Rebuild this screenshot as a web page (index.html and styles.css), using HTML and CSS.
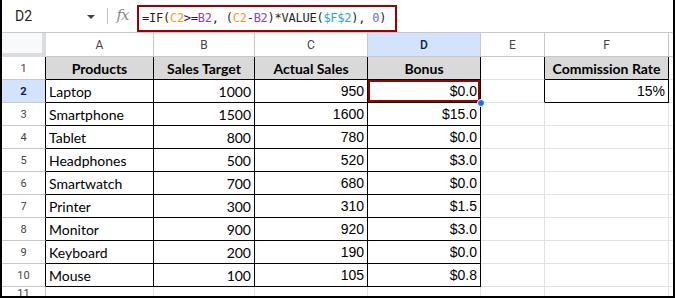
FILE: index.html
```html
<!DOCTYPE html>
<html>
<head>
<meta charset="utf-8">
<link rel="stylesheet" href="styles.css">
</head>
<body>
<div class="app">
  <div class="fbar">
    <div class="namebox">
      <span class="name">D2</span>
      <svg class="caret" width="8" height="4" viewBox="0 0 8 4"><path d="M0 0h8L4 4z" fill="#444"/></svg>
    </div>
    <div class="sep"></div>
    <div class="fx">fx</div>
    <div class="formula"><span>=IF(</span><span class="r1">C2</span><span>&gt;=</span><span class="r2">B2</span><span>, (</span><span class="r1">C2</span><span>-</span><span class="r2">B2</span><span>)*VALUE(</span><span class="r3">$F$2</span><span>), </span><span class="num">0</span><span>)</span></div>
  </div>
  <div class="grid">
    <div class="corner"></div>
    <div class="ch">A</div><div class="ch">B</div><div class="ch">C</div><div class="ch sel">D</div><div class="ch">E</div><div class="ch">F</div><div class="ch end"></div>

    <div class="rh t">1</div>
    <div class="c t hd">Products</div><div class="c t hd">Sales Target</div><div class="c t hd">Actual Sales</div><div class="c t hd">Bonus</div><div class="c tl"></div><div class="c t hd">Commission Rate</div><div class="c end"></div>

    <div class="rh t sel">2</div>
    <div class="c t">Laptop</div><div class="c t n">1000</div><div class="c t a">950</div><div class="c t a active">$0.0<span class="dot"></span></div><div class="c tl"></div><div class="c t a">15%</div><div class="c end"></div>

    <div class="rh t">3</div>
    <div class="c t">Smartphone</div><div class="c t n">1500</div><div class="c t a">1600</div><div class="c t a">$15.0</div><div class="c"></div><div class="c"></div><div class="c end"></div>

    <div class="rh t">4</div>
    <div class="c t">Tablet</div><div class="c t n">800</div><div class="c t a">780</div><div class="c t a">$0.0</div><div class="c"></div><div class="c"></div><div class="c end"></div>

    <div class="rh t">5</div>
    <div class="c t">Headphones</div><div class="c t n">500</div><div class="c t a">520</div><div class="c t a">$3.0</div><div class="c"></div><div class="c"></div><div class="c end"></div>

    <div class="rh t">6</div>
    <div class="c t">Smartwatch</div><div class="c t n">700</div><div class="c t a">680</div><div class="c t a">$0.0</div><div class="c"></div><div class="c"></div><div class="c end"></div>

    <div class="rh t">7</div>
    <div class="c t">Printer</div><div class="c t n">300</div><div class="c t a">310</div><div class="c t a">$1.5</div><div class="c"></div><div class="c"></div><div class="c end"></div>

    <div class="rh t">8</div>
    <div class="c t">Monitor</div><div class="c t n">900</div><div class="c t a">920</div><div class="c t a">$3.0</div><div class="c"></div><div class="c"></div><div class="c end"></div>

    <div class="rh t">9</div>
    <div class="c t">Keyboard</div><div class="c t n">200</div><div class="c t a">190</div><div class="c t a">$0.0</div><div class="c"></div><div class="c"></div><div class="c end"></div>

    <div class="rh t">10</div>
    <div class="c t">Mouse</div><div class="c t n">100</div><div class="c t a">105</div><div class="c t a">$0.8</div><div class="c"></div><div class="c"></div><div class="c end"></div>

    <div class="rh">11</div>
    <div class="c"></div><div class="c"></div><div class="c"></div><div class="c"></div><div class="c"></div><div class="c"></div><div class="c end"></div>
  </div>
</div>
</body>
</html>
```

FILE: styles.css
```css
* { box-sizing: border-box; }
html, body { margin: 0; padding: 0; background: #fff; }
.app {
  width: 675px;
  height: 298px;
  border-left: 2px solid #000;
  border-right: 2px solid #000;
  border-bottom: 2px solid #000;
  overflow: hidden;
  display: flex;
  flex-direction: column;
  font-family: "Liberation Sans", Arial, sans-serif;
}
.fbar {
  height: 33px;
  flex: none;
  display: flex;
  align-items: center;
  border-bottom: 1px solid #c7c7c7;
}
.namebox {
  width: 103px;
  display: flex;
  align-items: center;
  justify-content: space-between;
  padding: 0 10px 0 13px;
}
.name { font-family: Roboto, "Liberation Sans", sans-serif; font-size: 14px; color: #1f1f1f; }
.caret { display: block; margin-top: 1px; }
.sep { width: 1px; height: 16px; background: #c7c7c7; margin-left: 2px; }
.fx {
  width: 29px;
  text-align: center;
  font-family: "DejaVu Serif", serif;
  font-style: italic;
  font-size: 15px;
  color: #8a8a8a;
  letter-spacing: -1px;
  margin-top: -2px;
}
.formula {
  margin-top: 4px;
  height: 27px;
  width: 260px;
  border: 2px solid #990000;
  padding: 0 0 0 3px;
  display: flex;
  align-items: center;
  font-family: "DejaVu Sans Mono", monospace;
  font-size: 12px;
  letter-spacing: -0.25px;
  color: #1f1f1f;
  white-space: pre;
}
.r1 { color: #f09a2a; }
.r2 { color: #8e44a6; }
.r3 { color: #2ea3d3; }
.num { color: #5e72d6; }

.grid {
  flex: 1;
  display: grid;
  grid-template-columns: 44px 108px 101px 113px 113px 64px 124px 1fr;
  grid-template-rows: 24px repeat(10, 23px) 1fr;
}
.corner { background: #f8f9fa; border-right: 4px solid #dadce0; border-bottom: 4px solid #dadce0; }
.ch {
  border-right: 1px solid #c7c7c7;
  border-bottom: 1px solid #c7c7c7;
  display: flex; align-items: center; justify-content: center;
  font-family: Roboto, "Liberation Sans", sans-serif;
  font-size: 12px;
  color: #444;
}
.ch.sel { background: #d3e3fd; color: #0b1f4b; font-weight: 500; }
.ch.end { border-right: none; background: #fff; }
.rh {
  border-right: 1px solid #c7c7c7;
  border-bottom: 1px solid #c7c7c7;
  display: flex; align-items: center; justify-content: center;
  font-family: Roboto, "Liberation Sans", sans-serif;
  font-size: 11px;
  color: #444;
}
.rh.t { border-right-color: #000; }
.rh.sel { background: #d3e3fd; color: #0b1f4b; font-weight: 700; }
.c {
  position: relative;
  border-right: 1px solid #e2e2e2;
  border-bottom: 1px solid #e2e2e2;
  display: flex; align-items: center;
  padding: 0 3px;
  font-family: Lato, "Liberation Sans", sans-serif;
  font-size: 14px;
  color: #000;
  white-space: nowrap;
}
.c.t { border-right-color: #000; border-bottom-color: #000; }
.c.tl { border-right-color: #000; }
.c.hd { background: #d9d9d9; font-weight: 700; justify-content: center; }
.c.n { justify-content: flex-end; }
.c.a { justify-content: flex-end; font-family: "Liberation Sans", Arial, sans-serif; font-size: 14px; }
.c.end { border-right: none; }
.active { box-shadow: inset 0 0 0 2px #990000; }
.dot {
  position: absolute;
  right: -5px;
  bottom: -5px;
  width: 8px;
  height: 8px;
  border-radius: 50%;
  background: #1a73e8;
  border: 1px solid #fff;
  z-index: 2;
}
```
